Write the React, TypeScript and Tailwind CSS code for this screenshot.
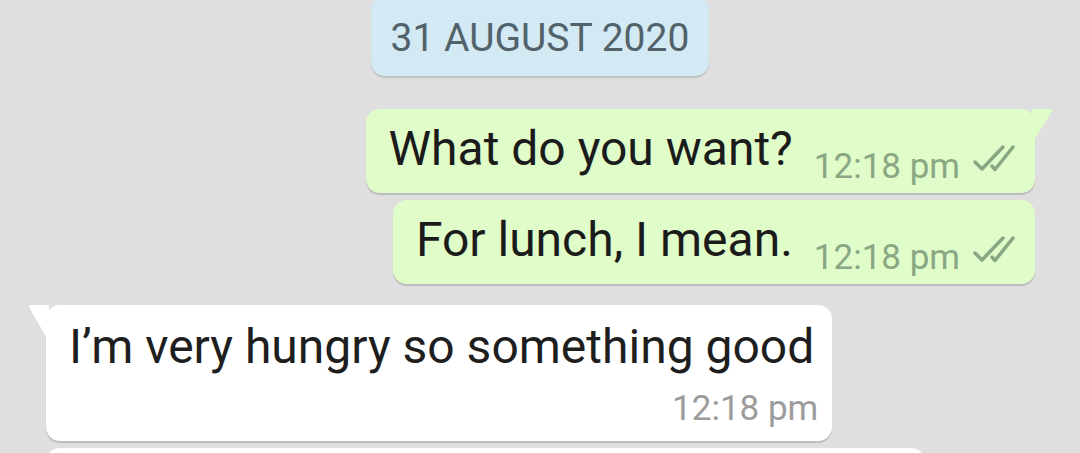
import React from "react";

function DoubleTick() {
  return (
    <svg width="46" height="30" viewBox="0 0 46 30" fill="none" className="shrink-0">
      <path d="M6 18 L13 25 L34 3" stroke="#89a683" strokeWidth="3.5" strokeLinecap="round" strokeLinejoin="round" />
      <path d="M23 22 L26 25.5 L44 3" stroke="#89a683" strokeWidth="3.5" strokeLinecap="round" strokeLinejoin="round" />
    </svg>
  );
}

function Outgoing({ text, tail, time }: { text: string; tail?: boolean; time: string }) {
  return (
    <div className="relative self-end mr-[45px]">
      {tail && (
        <svg className="absolute -right-[19px] top-0" width="22" height="34" viewBox="0 0 22 34">
          <path d="M0 0 L18 0 Q21 0 19.5 3 L1 33 L0 34 Z" fill="#e0fcc8" />
        </svg>
      )}
      <div className="flex h-[84px] items-start rounded-[14px] bg-[#e0fcc8] pl-[23px] pr-[20px] shadow-[0_2px_1px_rgba(0,0,0,0.16)]">
        <span className="mt-[16px] text-[48px] leading-none text-[#1b1b1b]">{text}</span>
        <span className="ml-[21px] mt-[40px] text-[35px] leading-none text-[#8aa783]">{time}</span>
        <span className="ml-[9px] mt-[35px]">
          <DoubleTick />
        </span>
      </div>
    </div>
  );
}

export default function App() {
  return (
    <div
      className="flex h-[453px] w-[1080px] flex-col overflow-hidden bg-[#dfdfdf]"
      style={{ fontFamily: "Roboto, 'Noto Sans', sans-serif" }}
    >
      <div className="-mt-[4px] self-center rounded-[14px] bg-[#d3e9f4] px-[20px] pt-[23px] pb-[18px] shadow-[0_2px_1px_rgba(0,0,0,0.14)]">
        <span className="block text-[39px] leading-none text-[#52626b]">31 AUGUST 2020</span>
      </div>

      <div className="mt-[33px] flex flex-col gap-[7px]">
        <Outgoing text="What do you want?" time="12:18 pm" tail />
        <Outgoing text="For lunch, I mean." time="12:18 pm" />
      </div>

      <div className="relative ml-[46px] mt-[21px] self-start">
        <svg className="absolute -left-[19px] top-0" width="22" height="36" viewBox="0 0 22 36">
          <path d="M22 0 L4 0 Q1 0 2.5 3 L21 35 L22 36 Z" fill="#ffffff" />
        </svg>
        <div className="flex h-[136px] flex-col rounded-[14px] bg-white pl-[23px] pr-[14px] pt-[18px] shadow-[0_2px_1px_rgba(0,0,0,0.16)]">
          <span className="pr-[4px] text-[48px] leading-none text-[#1e1e1e]">I’m very hungry so something good</span>
          <span className="mt-[20px] self-end text-[35px] leading-none text-[#9c9c9c]">12:18 pm</span>
        </div>
      </div>

      <div className="ml-[46px] mt-[7px] h-[60px] w-[879px] shrink-0 rounded-[14px] bg-white" />
    </div>
  );
}
